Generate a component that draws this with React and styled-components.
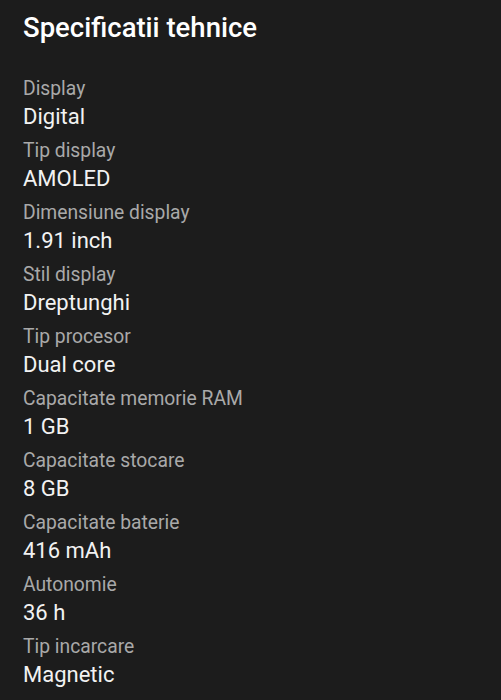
import React from "react";
import styled, { createGlobalStyle } from "styled-components";

const GlobalStyle = createGlobalStyle`
  html, body {
    margin: 0;
    padding: 0;
    background: #1c1c1c;
  }
  body {
    font-family: Roboto, "Noto Sans", sans-serif;
  }
`;

const Page = styled.div`
  min-height: 700px;
  background: #1c1c1c;
  padding: 11px 23px 0;
  box-sizing: border-box;
`;

const Title = styled.h1`
  margin: 0 0 30px;
  font-size: 27.5px;
  line-height: 34px;
  font-weight: 500;
  color: #ffffff;
`;

const SpecList = styled.dl`
  margin: 0;
  display: flex;
  flex-direction: column;
  gap: 6px;
`;

const SpecItem = styled.div`
  display: flex;
  flex-direction: column;
`;

const Label = styled.dt`
  font-size: 19.3px;
  line-height: 28px;
  color: #a9a9a9;
`;

const Value = styled.dd`
  margin: 0;
  font-size: 22px;
  line-height: 28px;
  color: #f2f2f2;
`;

const specs = [
  ["Display", "Digital"],
  ["Tip display", "AMOLED"],
  ["Dimensiune display", "1.91 inch"],
  ["Stil display", "Dreptunghi"],
  ["Tip procesor", "Dual core"],
  ["Capacitate memorie RAM", "1 GB"],
  ["Capacitate stocare", "8 GB"],
  ["Capacitate baterie", "416 mAh"],
  ["Autonomie", "36 h"],
  ["Tip incarcare", "Magnetic"],
];

const App = () => {
  return (
    <>
      <GlobalStyle />
      <Page>
        <Title>Specificatii tehnice</Title>
        <SpecList>
          {specs.map(([label, value]) => (
            <SpecItem key={label}>
              <Label>{label}</Label>
              <Value>{value}</Value>
            </SpecItem>
          ))}
        </SpecList>
      </Page>
    </>
  );
};

export default App;
